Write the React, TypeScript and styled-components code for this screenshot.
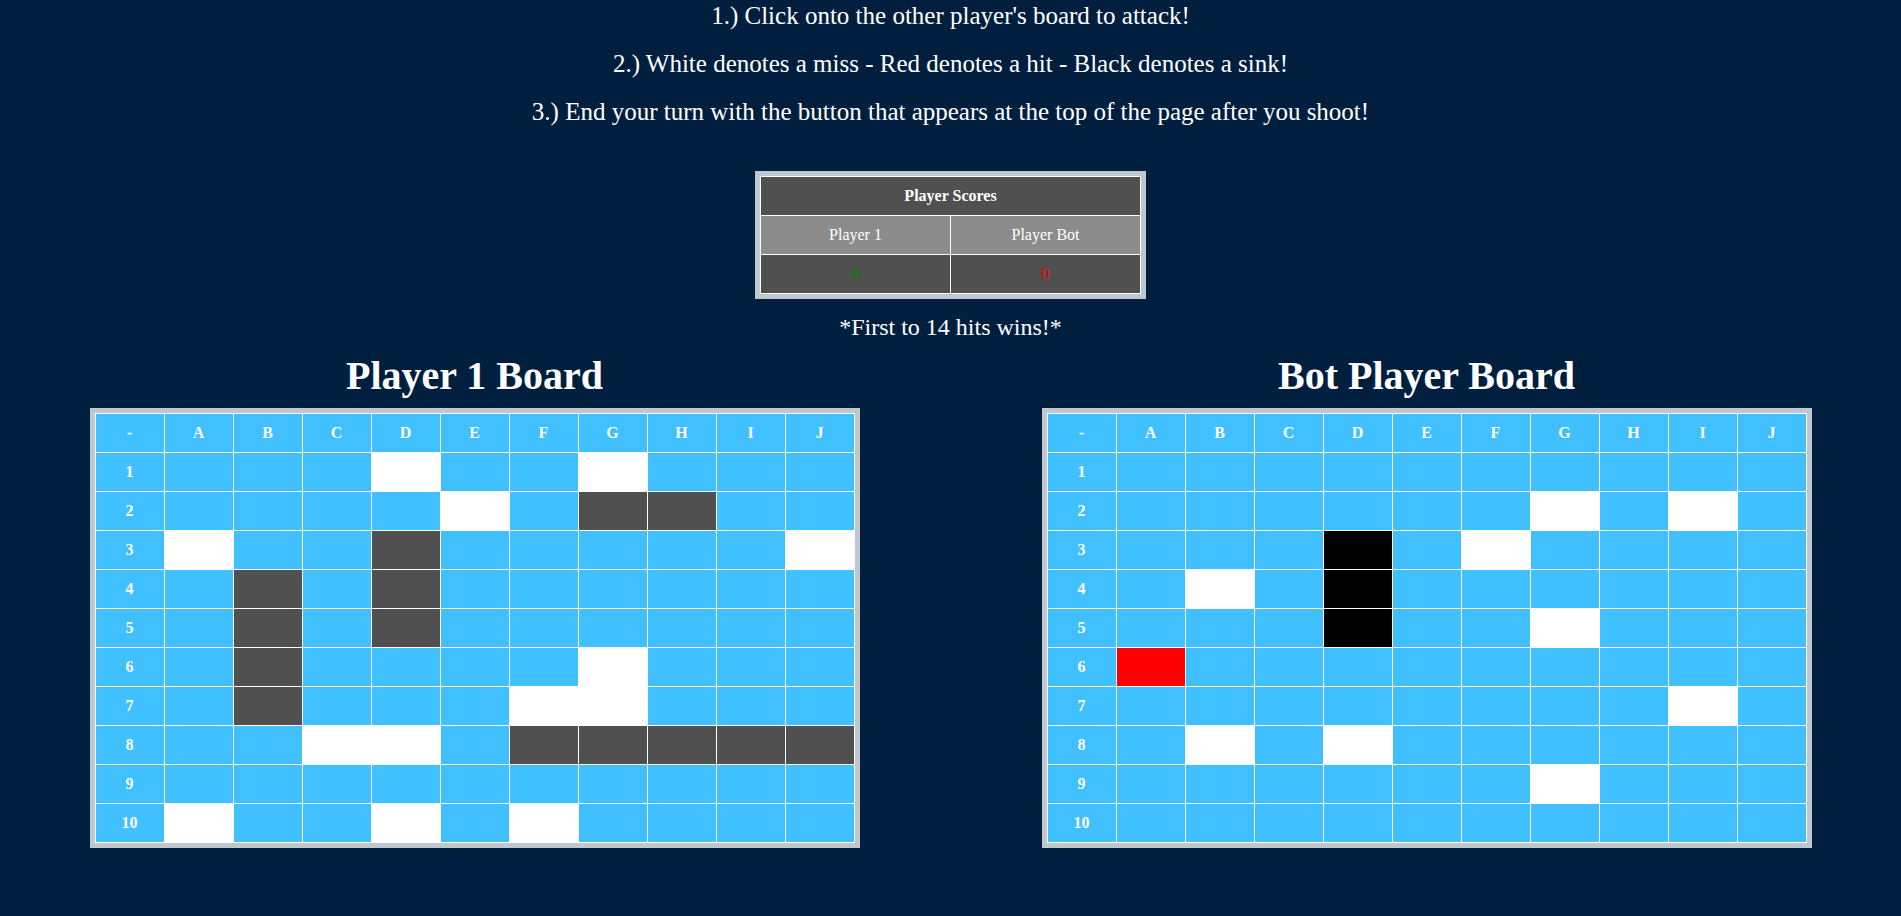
import styled, { createGlobalStyle } from "styled-components"

type Mark = "" | "m" | "s" | "h" | "k"

const COLS = ["A", "B", "C", "D", "E", "F", "G", "H", "I", "J"]

// rows 1..10, one char per column: . water, m miss, s ship, h hit, k sunk
const playerBoard = [
    "...m..m...",
    "....m.ss..",
    "m..s.....m",
    ".s.s......",
    ".s.s......",
    ".s....m...",
    ".s...mm...",
    "..mm.sssss",
    "..........",
    "m..m.m....",
]

const botBoard = [
    "..........",
    "......m.m.",
    "...k.m....",
    ".m.k......",
    "...k..m...",
    "h.........",
    "........m.",
    ".m.m......",
    "......m...",
    "..........",
]

const cellColors: Record<string, string> = {
    ".": "#40c0ff",
    m: "#ffffff",
    s: "#505050",
    h: "#ff0000",
    k: "#000000",
}

const GlobalStyle = createGlobalStyle`
    html, body {
        margin: 0;
        padding: 0;
        background: #001f3f;
    }
    body {
        font-family: "Liberation Serif", "Times New Roman", serif;
        color: #ffffff;
    }
`

const Page = styled.div`
    display: flex;
    flex-flow: column;
    align-items: center;
    padding-top: 2px;
    min-height: 916px;
    box-sizing: border-box;
`

const Rules = styled.div`
    display: flex;
    flex-flow: column;
    align-items: center;
    gap: 20px;
    margin-bottom: 45px;
`

const Line = styled.p`
    margin: 0;
    font-size: 25px;
    line-height: 28px;
    text-align: center;
`

const ScoreTable = styled.table`
    border: 5px solid #c0c8cf;
    border-spacing: 1px;
    background: #ffffff;

    th,
    td {
        width: 189px;
        height: 38px;
        padding: 0;
        text-align: center;
        font-size: 16px;
    }
`

const ScoreHead = styled.th`
    background: #505050;
    font-weight: bold;
`

const ScoreName = styled.td`
    background: #8c8c8c;
`

const ScoreValue = styled.td<{ $color: string }>`
    background: #505050;
    color: ${({ $color }) => $color};
`

const Hint = styled(Line)`
    margin-top: 14px;
    font-size: 24px;
`

const Boards = styled.div`
    display: flex;
    width: 100%;
    margin-top: 12px;
`

const BoardColumn = styled.section<{ $shift?: number }>`
    flex: 1;
    display: flex;
    flex-flow: column;
    align-items: center;
    padding-left: ${({ $shift }) => $shift ?? 0}px;
`

const BoardTitle = styled.h1`
    margin: 0 0 9px;
    font-size: 40px;
    line-height: 46px;
    font-weight: bold;
`

const Grid = styled.table`
    border: 5px solid #c0c8cf;
    border-spacing: 1px;
    background: #ffffff;
`

const Cell = styled.td<{ $bg: string }>`
    width: 68px;
    height: 38px;
    padding: 0;
    background: ${({ $bg }) => $bg};
    text-align: center;
    font-size: 16px;
    font-weight: bold;
    color: #ffffff;
`

const Board = ({ title, rows, shift }: { title: string; rows: string[]; shift?: number }) => (
    <BoardColumn $shift={shift}>
        <BoardTitle>{title}</BoardTitle>
        <Grid>
            <tbody>
                <tr>
                    <Cell $bg={cellColors["."]}>-</Cell>
                    {COLS.map((c) => (
                        <Cell key={c} $bg={cellColors["."]}>
                            {c}
                        </Cell>
                    ))}
                </tr>
                {rows.map((row, i) => (
                    <tr key={`row-${i}`}>
                        <Cell $bg={cellColors["."]}>{i + 1}</Cell>
                        {row.split("").map((m, j) => (
                            <Cell key={`${i}-${j}`} $bg={cellColors[m as Mark] ?? cellColors["."]} />
                        ))}
                    </tr>
                ))}
            </tbody>
        </Grid>
    </BoardColumn>
)

export default function App() {
    return (
        <Page>
            <GlobalStyle />
            <Rules>
                <Line>1.) Click onto the other player's board to attack!</Line>
                <Line>2.) White denotes a miss - Red denotes a hit - Black denotes a sink!</Line>
                <Line>3.) End your turn with the button that appears at the top of the page after you shoot!</Line>
            </Rules>
            <ScoreTable>
                <tbody>
                    <tr>
                        <ScoreHead colSpan={2}>Player Scores</ScoreHead>
                    </tr>
                    <tr>
                        <ScoreName>Player 1</ScoreName>
                        <ScoreName>Player Bot</ScoreName>
                    </tr>
                    <tr>
                        <ScoreValue $color="#008000">4</ScoreValue>
                        <ScoreValue $color="#ff0000">0</ScoreValue>
                    </tr>
                </tbody>
            </ScoreTable>
            <Hint>*First to 14 hits wins!*</Hint>
            <Boards>
                <Board title="Player 1 Board" rows={playerBoard} />
                <Board title="Bot Player Board" rows={botBoard} shift={3} />
            </Boards>
        </Page>
    )
}
